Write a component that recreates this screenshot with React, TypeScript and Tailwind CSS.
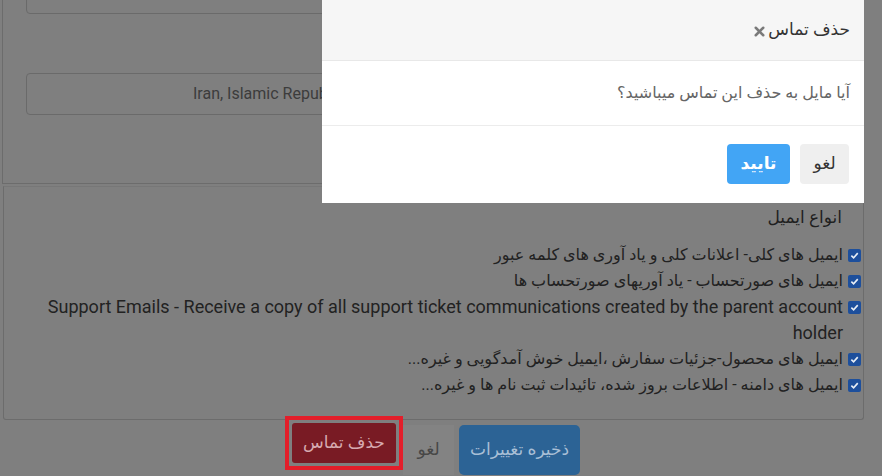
import { X } from "lucide-react";

const font = { fontFamily: "Roboto, 'DejaVu Sans', sans-serif" };

const emailTypes = [
  { text: "ایمیل های کلی- اعلانات کلی و یاد آوری های کلمه عبور", latin: false },
  { text: "ایمیل های صورتحساب - یاد آوریهای صورتحساب ها", latin: false },
  {
    text: "Support Emails - Receive a copy of all support ticket communications created by the parent account holder",
    latin: true,
  },
  { text: "ایمیل های محصول-جزئیات سفارش ،ایمیل خوش آمدگویی و غیره...", latin: false },
  { text: "ایمیل های دامنه - اطلاعات بروز شده، تائیدات ثبت نام ها و غیره...", latin: false },
];

function Check() {
  return (
    <span className="mt-[7px] w-[13px] h-[13px] shrink-0 rounded-[2px] bg-[#1d4f9c] flex items-center justify-center">
      <svg width="9" height="9" viewBox="0 0 10 10">
        <path d="M1.5 5.2 L4 7.6 L8.6 2.4" fill="none" stroke="#e8eef6" strokeWidth="1.8" />
      </svg>
    </span>
  );
}

export default function App() {
  return (
    <div className="relative w-[882px] h-[476px] overflow-hidden bg-[#7f7f7f]" style={font}>
      {/* page under the backdrop */}
      <div className="flex flex-col w-[862px] ml-[2px]">
        <div className="h-[184px] border-l border-b border-[#6c6c6c] pl-[23px] pr-[20px]">
          <div className="h-[41px] -mt-[27px] rounded-[4px] border border-[#6a6a6a] shadow-[inset_0_1px_1px_rgba(0,0,0,0.08)]" />
          <div className="mt-[59px] h-[42px] rounded-[4px] border border-[#6a6a6a] flex items-center pl-[166px] text-[16px] text-[#3c3c3c]">
            Iran, Islamic Republic of
          </div>
        </div>

        <div dir="rtl" className="mt-[2px] ml-[1px] h-[234px] rounded-b-[3px] border border-[#6c6c6c] border-t-[#777] pr-[2px] pl-[40px] pt-[17px]">
          <div className="text-[17px] text-[#1f1f1f] leading-[26px] pr-[19px]">انواع ایمیل</div>
          <div className="mt-[12px] flex flex-col">
            {emailTypes.map((t) => (
              <div
                key={t.text}
                className={`flex items-start gap-[5px] leading-[26px] text-[#222] ${t.latin ? "text-[18px]" : "text-[16px]"}`}
              >
                <Check />
                <span>{t.text}</span>
              </div>
            ))}
          </div>
        </div>

        <div dir="rtl" className="flex items-end justify-center gap-[5px] h-[55px] pr-[1px]">
          <button className="w-[121px] h-[50px] rounded-[5px] bg-[#2c6395] text-[#a9bfd6] text-[17px]">
            ذخیره تغییرات
          </button>
          <button className="w-[51px] h-[50px] bg-[#838383] text-[#474747] text-[17px] -ml-[5px]">
            لغو
          </button>
          <div className="w-[118px] h-[54px] border-[4px] border-[#e31e2a] p-[3px] mb-[5px] flex">
            <button className="flex-1 rounded-[3px] bg-[#791b24] text-[#d6aab0] text-[17px]">
              حذف تماس
            </button>
          </div>
        </div>
      </div>

      {/* modal dialog */}
      <div dir="rtl" className="absolute left-[322px] top-0 w-[542px] h-[203px] bg-white flex flex-col">
        <div className="h-[61px] bg-[#f6f6f6] border-b border-[#e8e8e8] flex items-center px-[14px] gap-[1px]">
          <span className="text-[17px] text-[#333]">حذف تماس</span>
          <X size={15} strokeWidth={4} className="text-[#7a7a7a] mt-[2px]" />
        </div>
        <div className="h-[65px] border-b border-[#ececec] flex items-center px-[14px] text-[16px] text-[#666]">
          آیا مایل به حذف این تماس میباشید؟
        </div>
        <div className="flex gap-[10px] px-[15px] pt-[18px]">
          <button className="w-[49px] h-[40px] rounded-[4px] bg-[#efefef] text-[17px] text-[#333]">لغو</button>
          <button className="w-[63px] h-[40px] rounded-[4px] bg-[#42a5f5] text-[17px] font-bold text-white">تایید</button>
        </div>
      </div>
    </div>
  );
}
